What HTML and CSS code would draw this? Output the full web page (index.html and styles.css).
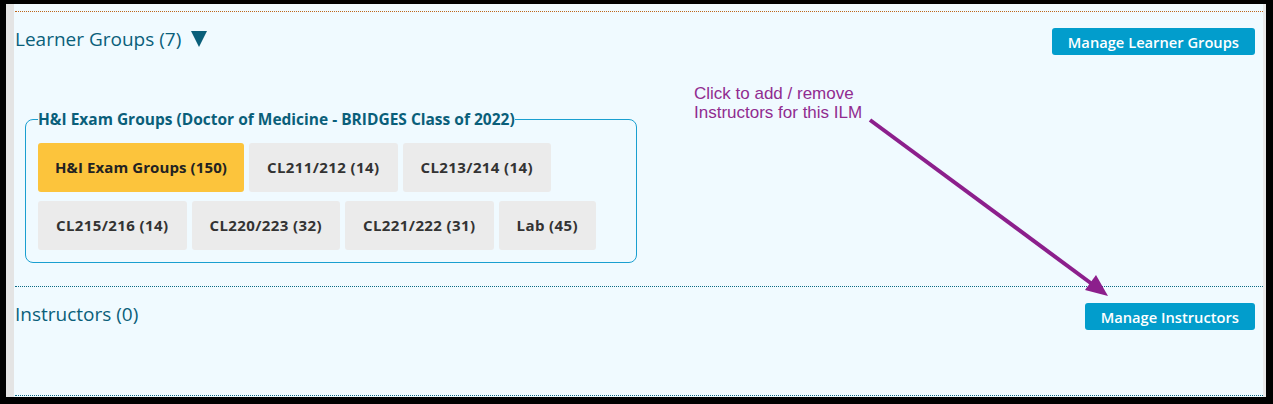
FILE: index.html
```html
<!DOCTYPE html>
<html lang="en">
<head>
<meta charset="utf-8">
<title>Learner Groups</title>
<link rel="stylesheet" href="styles.css">
</head>
<body>
<div class="frame">
  <div class="top-rule"></div>
  <section class="learners">
    <div class="section-head">
      <h2 class="title">Learner Groups (7) <svg class="caret" width="16" height="17" viewBox="0 0 16 17"><polygon points="0,1 16,1 8,17" fill="#0a5f7a"/></svg></h2>
      <button class="action">Manage Learner Groups</button>
    </div>
    <fieldset class="cohort">
      <legend>H&amp;I Exam Groups (Doctor of Medicine - BRIDGES Class of 2022)</legend>
      <div class="groups">
        <span class="group selected">H&amp;I Exam Groups (150)</span>
        <span class="group">CL211/212 (14)</span>
        <span class="group">CL213/214 (14)</span>
        <span class="group">CL215/216 (14)</span>
        <span class="group">CL220/223 (32)</span>
        <span class="group">CL221/222 (31)</span>
        <span class="group">Lab (45)</span>
      </div>
    </fieldset>
  </section>
  <section class="instructors">
    <div class="section-head">
      <h2 class="title">Instructors (0)</h2>
      <button class="action">Manage Instructors</button>
    </div>
  </section>
</div>
<div class="note">Click to add / remove<br>Instructors for this ILM</div>
<svg class="arrow" width="1273" height="404" viewBox="0 0 1273 404">
  <line x1="870" y1="120" x2="1092" y2="284" stroke="#8c1f8c" stroke-width="4"/>
  <polygon points="1108,296 1085,290 1096,275" fill="#8c1f8c"/>
</svg>
</body>
</html>
```

FILE: styles.css
```css
html, body {
  margin: 0;
  padding: 0;
}
body {
  background: #000;
  width: 1273px;
  height: 404px;
  position: relative;
  overflow: hidden;
  font-family: "Open Sans", Lato, sans-serif;
}
.frame {
  box-sizing: border-box;
  margin: 4px 7px 0 6px;
  height: 393px;
  background: #f0faff;
  border-left: 8px solid #e4e4e4;
  border-right: 3px solid #e9e9e9;
  padding: 7px 0 0 1px;
  display: flex;
  flex-direction: column;
}
.top-rule {
  border-top: 1px dotted #c0661a;
}
.section-head {
  display: flex;
  justify-content: space-between;
  align-items: center;
  height: 27px;
}
.learners {
  padding-top: 16px;
}
.title {
  margin: 0 0 4px 0;
  font-size: 19px;
  font-weight: 500;
  color: #0a5f7a;
  line-height: 27px;
  display: flex;
  align-items: center;
}
.caret {
  margin-left: 10px;
  margin-top: -3px;
}
.action {
  font-family: inherit;
  font-size: 14.7px;
  font-weight: 600;
  color: #fff;
  background: #029dcc;
  border: none;
  border-radius: 3px;
  height: 27px;
  padding: 0 16px;
  margin-right: 8px;
}
.cohort {
  box-sizing: border-box;
  width: 612px;
  margin: 56px 0 0 10px;
  padding: 16px 12px 12px 12px;
  border: 1px solid #1a9fd0;
  border-radius: 8px;
  min-inline-size: 0;
}
.cohort legend {
  padding: 0;
  font-size: 15.5px;
  font-weight: 700;
  color: #0a5f7a;
  line-height: 16px;
}
.groups {
  display: flex;
  flex-wrap: wrap;
  gap: 9px 5px;
}
.group {
  display: block;
  background: #ebebeb;
  color: #333;
  font-size: 15px;
  font-weight: 700;
  letter-spacing: 0.4px;
  line-height: 49px;
  height: 49px;
  padding: 0 18px;
  border-radius: 3px;
}
.group.selected {
  background: #fcc43c;
  color: #222;
  letter-spacing: 0.1px;
  padding: 0 17px;
}
.instructors {
  margin-top: 23px;
  border-top: 1px dotted #0c6a85;
  border-bottom: 1px dotted #0c6a85;
  padding-top: 16px;
  flex: 1;
  margin-bottom: 1px;
}
.note {
  position: absolute;
  left: 694px;
  top: 84px;
  font-family: "Liberation Sans", Arial, sans-serif;
  font-size: 17px;
  line-height: 19px;
  color: #902c90;
}
.arrow {
  position: absolute;
  left: 0;
  top: 0;
  pointer-events: none;
}
```
